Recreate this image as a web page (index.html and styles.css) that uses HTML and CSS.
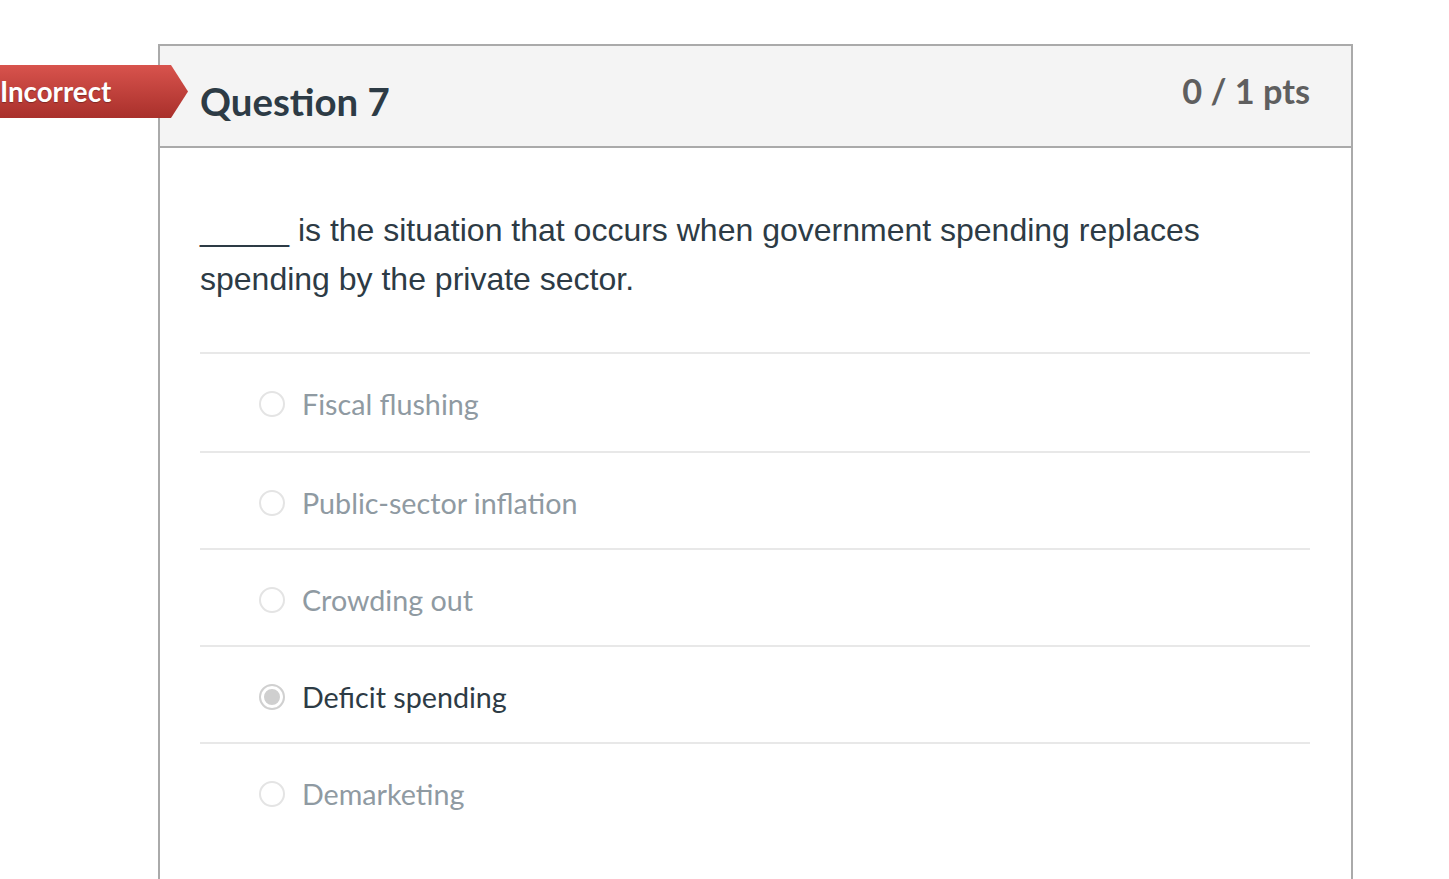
FILE: index.html
```html
<!DOCTYPE html>
<html lang="en">
  <head>
    <meta charset="UTF-8">
    <meta name="viewport" content="width=device-width, initial-scale=1.0">
    <title>Question 7</title>
    <link rel="stylesheet" href="styles.css">
  </head>
  <body>
    <div class="question">
      <div class="flag">Incorrect</div>
      <div class="question-header">
        <h2 class="question-title">Question 7</h2>
        <span class="question-points">0 / 1 pts</span>
      </div> <!-- question-header -->
      <div class="question-body">
        <p class="question-text">_____ is the situation that occurs when government spending replaces spending by the private sector.</p>
        <ul class="answers">
          <li class="answer"><span class="radio"></span>Fiscal flushing</li>
          <li class="answer"><span class="radio"></span>Public-sector inflation</li>
          <li class="answer"><span class="radio"></span>Crowding out</li>
          <li class="answer selected"><span class="radio"></span>Deficit spending</li>
          <li class="answer"><span class="radio"></span>Demarketing</li>
        </ul>
      </div> <!-- question-body -->
    </div> <!-- question -->
  </body>
</html>
```

FILE: styles.css
```css
      body {
          margin: 0;
          background: #fff;
          color: #2d3b45;
          font-family: Lato, "Open Sans", sans-serif;
          overflow: hidden;
      }
      .question {
          position: relative;
          box-sizing: border-box;
          width: 1195px;
          min-height: 835px;
          margin: 44px 0 0 158px;
          border: 2px solid #aaaaaa;
          border-bottom: none;
      }
      .flag {
          position: absolute;
          left: -160px;
          top: 19px;
          width: 188px;
          height: 53px;
          box-sizing: border-box;
          padding-left: 0;
          line-height: 53px;
          font-size: 27.7px;
          font-weight: 700;
          color: #fff;
          text-shadow: 0 1px 1px rgba(0, 0, 0, 0.3);
          background: linear-gradient(#d8534d, #a9302b);
          clip-path: polygon(0 0, 171px 0, 100% 50%, 171px 100%, 0 100%);
          z-index: 2;
      }
      .question-header {
          display: flex;
          justify-content: space-between;
          align-items: flex-start;
          height: 100px;
          padding: 0 41px 0 40px;
          background: #f4f4f4;
          border-bottom: 2px solid #aaaaaa;
      }
      .question-title {
          margin: 32px 0 0;
          font-size: 38.4px;
          line-height: 46px;
          font-weight: 700;
          color: #2d3b45;
      }
      .question-points {
          margin-top: 25px;
          font-size: 34.3px;
          line-height: 40px;
          font-weight: 700;
          color: #5f5f5f;
      }
      .question-body {
          padding: 58px 41px 0 40px;
      }
      .question-text {
          margin: 0 0 48px;
          font-family: "Liberation Sans", Arial, sans-serif;
          font-size: 32px;
          line-height: 49px;
          color: #2d3b45;
      }
      .answers {
          list-style-type: none;
          margin: 0;
          padding: 0;
      }
      .answer {
          display: flex;
          align-items: center;
          box-sizing: border-box;
          height: 97px;
          padding: 5px 0 0 59px;
          border-top: 2px solid #e8e8e8;
          font-size: 28.7px;
          color: #8f9aa2;
      }
      .answer:first-child {
          height: 99px;
          padding-top: 3px;
      }
      .radio {
          box-sizing: border-box;
          width: 26px;
          height: 26px;
          margin-right: 17px;
          border: 2px solid #e4e4e4;
          border-radius: 50%;
          background: #fff;
      }
      .selected {
          color: #2d3b45;
      }
      .selected .radio {
          border-color: #d0d0d0;
          box-shadow: inset 0 0 0 3px #fff, inset 0 0 0 12px #cfcfcf;
      }
```
